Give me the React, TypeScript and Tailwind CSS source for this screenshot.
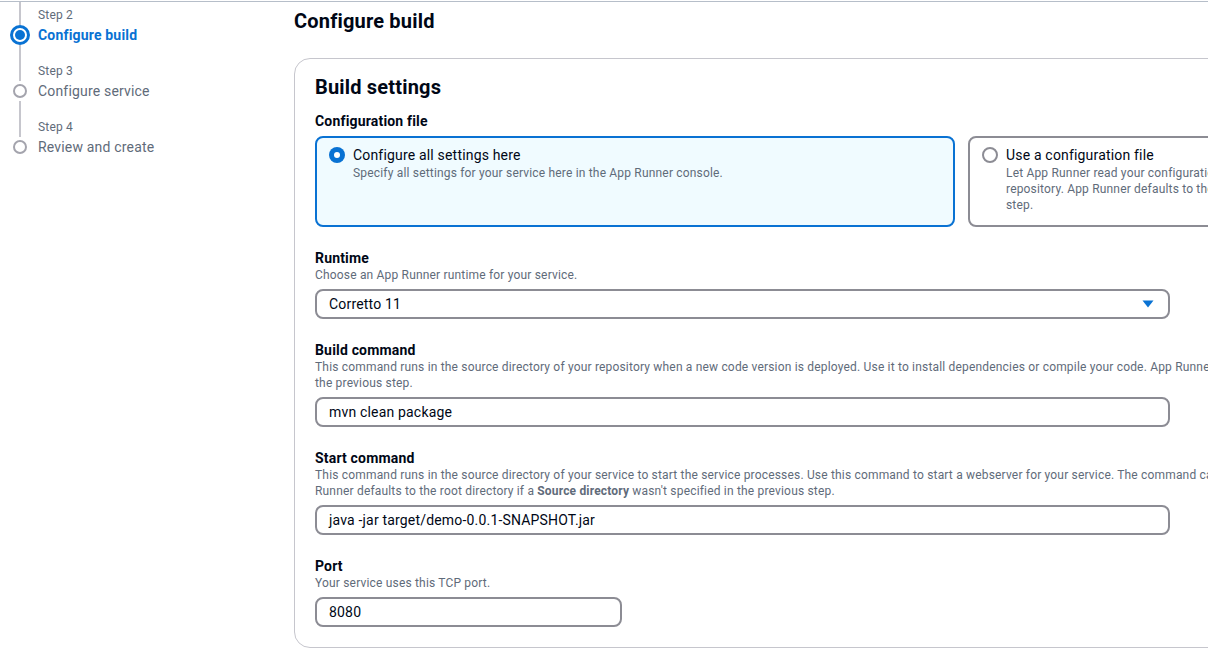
import { Fragment } from "react";

type Step = {
    label: string;
    title: string;
    active?: boolean;
};

const steps: Step[] = [
    { label: "Step 2", title: "Configure build", active: true },
    { label: "Step 3", title: "Configure service" },
    { label: "Step 4", title: "Review and create" },
];

function StepNav() {
    return (
        <nav className="w-[294px] shrink-0">
            {steps.map((step, i) => (
                <div key={step.label} className="flex">
                    <div className="w-10 flex flex-col items-center">
                        <div className={`w-0.5 ${i === 0 ? "h-[23px]" : "h-[25px]"} bg-[#c6c6cd]`} />
                        <div className="h-5 flex items-center justify-center">
                            {step.active ? (
                                <span className="w-5 h-5 rounded-full border-[3px] border-[#0972d3] flex items-center justify-center">
                                    <span className="w-2.5 h-2.5 rounded-full bg-[#0972d3]" />
                                </span>
                            ) : (
                                <span className="w-3.5 h-3.5 rounded-full border-2 border-[#a4a4ad]" />
                            )}
                        </div>
                        <div className={`w-0.5 flex-1 ${i < steps.length - 1 ? "bg-[#c6c6cd]" : ""}`} />
                    </div>
                    <div className={`${i === 0 ? "pt-[5px]" : "pt-[7px]"} pb-[11px] -ml-0.5`}>
                        <p className="text-xs leading-4 text-[#5f6b7a]">{step.label}</p>
                        <p
                            className={`mt-0.5 text-sm leading-5 ${step.active
                                ? "font-bold text-[#0972d3]"
                                : "text-[#5f6b7a]"
                                }`}
                        >
                            {step.title}
                        </p>
                    </div>
                </div>
            ))}
        </nav>
    );
}

function Field({
    label,
    description,
    children,
}: {
    label: string;
    description?: React.ReactNode;
    children: React.ReactNode;
}) {
    return (
        <div>
            <p className="text-sm leading-[18px] font-bold text-[#000716]">{label}</p>
            {description && (
                <p className="text-xs leading-4 text-[#5f6b7a]">{description}</p>
            )}
            <div className="mt-1.5">{children}</div>
        </div>
    );
}

function TextInput({ value, width = "w-[855px]" }: { value: string; width?: string }) {
    return (
        <div
            className={`${width} h-[30px] rounded-lg border-2 border-[#8c8c94] bg-white flex items-center px-3 text-sm text-[#000716]`}
        >
            {value}
        </div>
    );
}

function Tile({
    title,
    description,
    selected,
}: {
    title: string;
    description: React.ReactNode;
    selected?: boolean;
}) {
    return (
        <div
            className={`w-[640px] shrink-0 rounded-lg border-2 pl-3 pr-3 pt-[7px] pb-3 flex gap-2 ${selected
                ? "border-[#0972d3] bg-[#f0fbff]"
                : "border-[#8c8c94] bg-white"
                }`}
        >
            <div className="h-5 flex items-center">
                {selected ? (
                    <span className="w-4 h-4 rounded-full bg-[#0972d3] flex items-center justify-center">
                        <span className="w-1.5 h-1.5 rounded-full bg-white" />
                    </span>
                ) : (
                    <span className="w-4 h-4 rounded-full border-2 border-[#8c8c94] bg-white" />
                )}
            </div>
            <div>
                <p className="text-sm leading-5 text-[#000716]">{title}</p>
                <p className="text-xs leading-4 text-[#5f6b7a] whitespace-nowrap">{description}</p>
            </div>
        </div>
    );
}

export default function App() {
    return (
        <div
            className="w-[1208px] h-[657px] overflow-hidden bg-white mt-px border-t border-[#b6bec9] tracking-[0.18px]"
            style={{ fontFamily: "Roboto, 'Liberation Sans', sans-serif" }}
        >
            <div className="flex">
                <StepNav />
                <main className="shrink-0">
                    <h1 className="pt-[7px] text-xl leading-6 font-bold text-[#000716]">Configure build</h1>
                    <section className="mt-[25px] w-[1360px] rounded-2xl border border-[#c6c6cd] px-5 pt-4 pb-5">
                        <h2 className="text-xl leading-6 font-bold text-[#000716]">Build settings</h2>
                        <div className="mt-[13px] flex flex-col gap-[22px]">
                            <Field label="Configuration file">
                                <div className="flex gap-[13px]">
                                    <Tile
                                        selected
                                        title="Configure all settings here"
                                        description="Specify all settings for your service here in the App Runner console."
                                    />
                                    <Tile
                                        title="Use a configuration file"
                                        description={
                                            <Fragment>
                                                Let App Runner read your configuration from the apprunner.yaml file in your source
                                                <br />
                                                repository. App Runner defaults to the root directory if a Source directory wasn't specified in the previous
                                                <br />
                                                step.
                                            </Fragment>
                                        }
                                    />
                                </div>
                            </Field>
                            <Field label="Runtime" description="Choose an App Runner runtime for your service.">
                                <div className="w-[855px] h-[30px] rounded-lg border-2 border-[#8c8c94] bg-white flex items-center justify-between pl-3 pr-[14px] text-sm text-[#000716]">
                                    <span>Corretto 11</span>
                                    <svg width="12" height="8" viewBox="0 0 12 8">
                                        <path d="M0.5 0.5 H11.5 L6 7.5 Z" fill="#0972d3" />
                                    </svg>
                                </div>
                            </Field>
                            <Field
                                label="Build command"
                                description={
                                    <Fragment>
                                        This command runs in the source directory of your repository when a new code version is deployed. Use it to install dependencies or compile your code. App Runner uses the root directory if a <b>Source directory</b> wasn't specified in
                                        <br />
                                        the previous step.
                                    </Fragment>
                                }
                            >
                                <TextInput value="mvn clean package" />
                            </Field>
                            <Field
                                label="Start command"
                                description={
                                    <Fragment>
                                        This command runs in the source directory of your service to start the service processes. Use this command to start a webserver for your service. The command can access environment variables. App
                                        <br />
                                        Runner defaults to the root directory if a <b>Source directory</b> wasn't specified in the previous step.
                                    </Fragment>
                                }
                            >
                                <TextInput value="java -jar target/demo-0.0.1-SNAPSHOT.jar" />
                            </Field>
                            <Field label="Port" description="Your service uses this TCP port.">
                                <TextInput value="8080" width="w-[307px]" />
                            </Field>
                        </div>
                    </section>
                </main>
            </div>
        </div>
    );
}
